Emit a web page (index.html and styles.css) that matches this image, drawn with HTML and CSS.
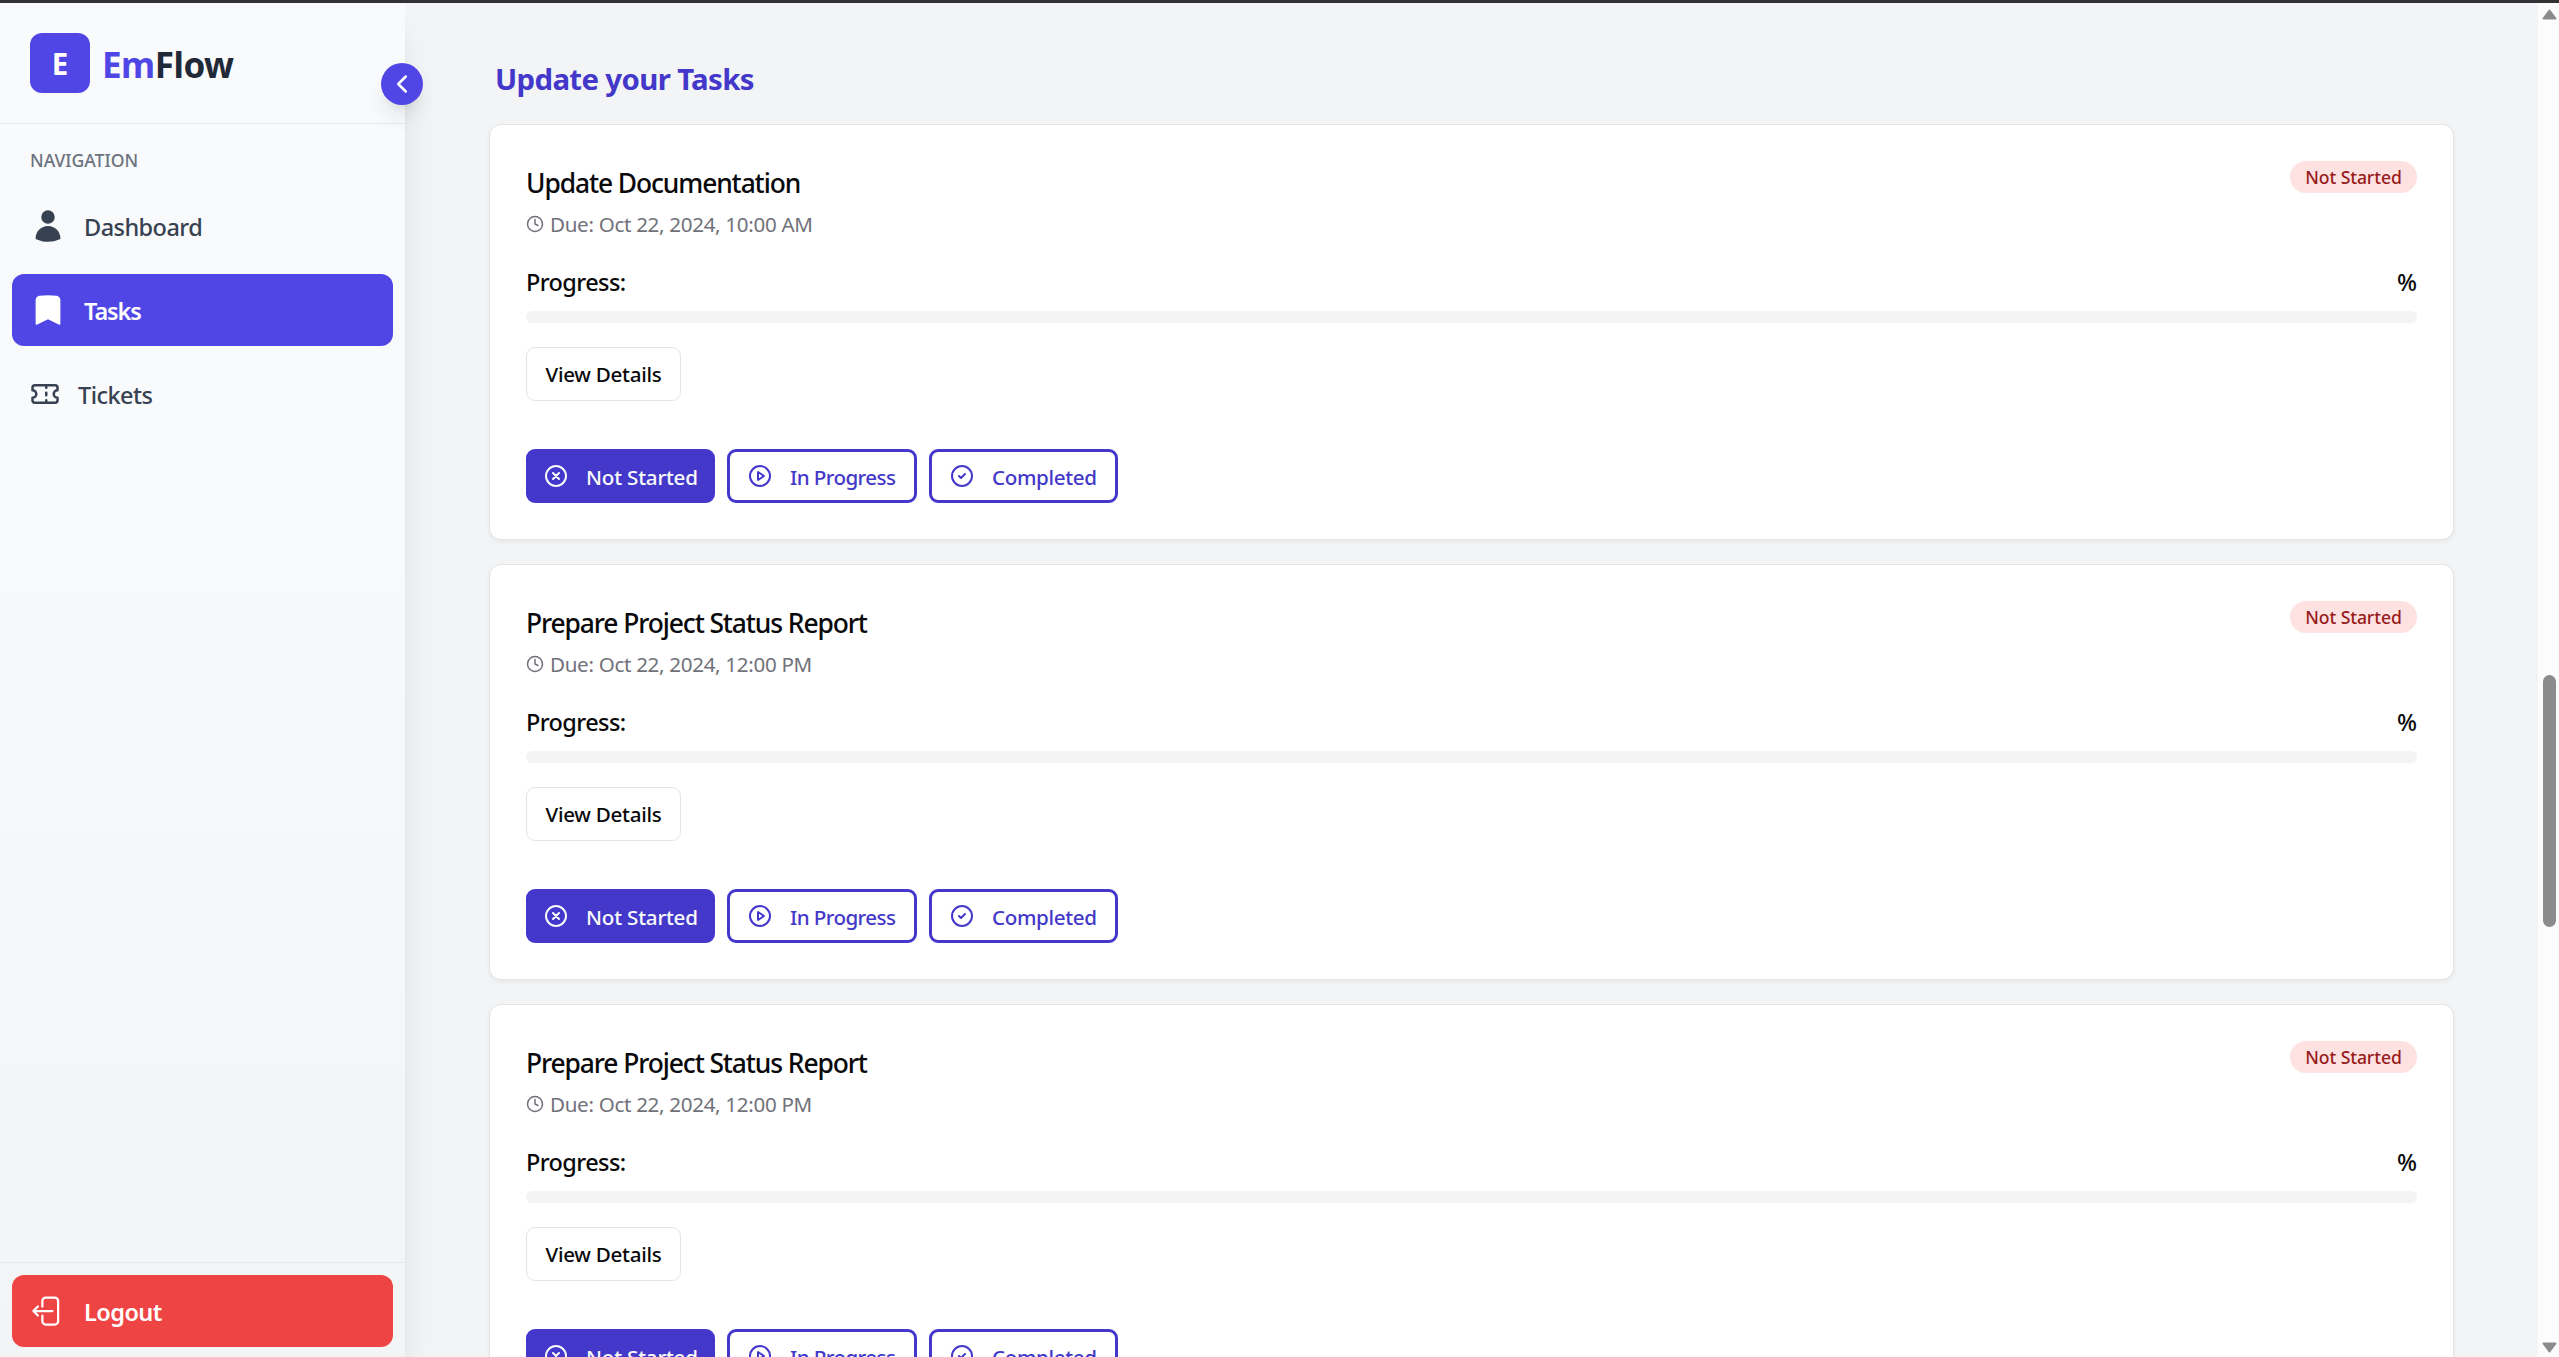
FILE: index.html
```html
<!DOCTYPE html>
<html lang="en">
<head>
<meta charset="utf-8">
<title>EmFlow - Tasks</title>
<link rel="stylesheet" href="styles.css">
</head>
<body>
<svg class="sprite" aria-hidden="true">
  <symbol id="clock" viewBox="0 0 24 24"><circle cx="12" cy="12" r="10"/><path d="M12 6v6l4 2"/></symbol>
  <symbol id="circle-x" viewBox="0 0 24 24"><circle cx="12" cy="12" r="10"/><path d="m15 9-6 6M9 9l6 6"/></symbol>
  <symbol id="circle-play" viewBox="0 0 24 24"><circle cx="12" cy="12" r="10"/><path d="m10 8 6 4-6 4z"/></symbol>
  <symbol id="circle-check" viewBox="0 0 24 24"><circle cx="12" cy="12" r="10"/><path d="m9 12 2 2 4-4"/></symbol>
</svg>
<div class="window-edge"></div>
<div class="app">
  <aside class="sidebar">
    <header class="brand">
      <div class="logo">E</div>
      <div class="brand-name"><span>Em</span>Flow</div>
    </header>
    <button class="toggle" aria-label="Collapse"><svg class="line" viewBox="0 0 24 24"><path d="m15 18-6-6 6-6"/></svg></button>
    <div class="nav-label">NAVIGATION</div>
    <nav class="nav">
      <a class="nav-item dashboard"><svg class="solid" viewBox="0 0 24 24"><path d="M7.5 6a4.5 4.5 0 119 0 4.5 4.5 0 01-9 0zM3.751 20.105a8.25 8.25 0 0116.498 0 .75.75 0 01-.437.695A18.683 18.683 0 0112 22.5c-2.786 0-5.433-.608-7.812-1.7a.75.75 0 01-.437-.695z"/></svg><span>Dashboard</span></a>
      <a class="nav-item active"><svg class="solid" viewBox="0 0 24 24"><path d="M6.32 2.577a49.255 49.255 0 0111.36 0c1.497.174 2.57 1.46 2.57 2.93V21a.75.75 0 01-1.085.67L12 18.089l-7.165 3.583A.75.75 0 013.75 21V5.507c0-1.47 1.073-2.756 2.57-2.93z"/></svg><span>Tasks</span></a>
      <a class="nav-item tickets"><svg class="line" viewBox="0 0 24 24"><path d="M2 9a3 3 0 0 1 0 6v2a2 2 0 0 0 2 2h16a2 2 0 0 0 2-2v-2a3 3 0 0 1 0-6V7a2 2 0 0 0-2-2H4a2 2 0 0 0-2 2ZM13 5v2M13 17v2M13 11v2"/></svg><span>Tickets</span></a>
    </nav>
    <footer class="side-foot">
      <a class="nav-item logout"><svg class="line thin" viewBox="0 0 24 24"><path d="M8.25 9V5.25A2.25 2.25 0 0 1 10.5 3h6a2.25 2.25 0 0 1 2.25 2.25v13.5A2.25 2.25 0 0 1 16.5 21h-6a2.25 2.25 0 0 1-2.25-2.25V15m-3 0-3-3m0 0 3-3m-3 3H15"/></svg><span>Logout</span></a>
    </footer>
  </aside>
  <main class="main">
    <h1>Update your Tasks</h1>
    <article class="card">
      <div class="card-head">
        <div>
          <h2>Update Documentation</h2>
          <p class="due"><svg class="line"><use href="#clock"/></svg><span>Due: Oct 22, 2024, 10:00 AM</span></p>
        </div>
        <span class="badge">Not Started</span>
      </div>
      <div class="progress-row"><span>Progress:</span><span class="percent">%</span></div>
      <div class="bar"></div>
      <button class="details">View Details</button>
      <div class="statuses">
        <button class="status selected"><svg class="line"><use href="#circle-x"/></svg><span>Not Started</span></button>
        <button class="status doing"><svg class="line"><use href="#circle-play"/></svg><span>In Progress</span></button>
        <button class="status done"><svg class="line"><use href="#circle-check"/></svg><span>Completed</span></button>
      </div>
    </article>
    <article class="card">
      <div class="card-head">
        <div>
          <h2>Prepare Project Status Report</h2>
          <p class="due"><svg class="line"><use href="#clock"/></svg><span>Due: Oct 22, 2024, 12:00 PM</span></p>
        </div>
        <span class="badge">Not Started</span>
      </div>
      <div class="progress-row"><span>Progress:</span><span class="percent">%</span></div>
      <div class="bar"></div>
      <button class="details">View Details</button>
      <div class="statuses">
        <button class="status selected"><svg class="line"><use href="#circle-x"/></svg><span>Not Started</span></button>
        <button class="status doing"><svg class="line"><use href="#circle-play"/></svg><span>In Progress</span></button>
        <button class="status done"><svg class="line"><use href="#circle-check"/></svg><span>Completed</span></button>
      </div>
    </article>
    <article class="card">
      <div class="card-head">
        <div>
          <h2>Prepare Project Status Report</h2>
          <p class="due"><svg class="line"><use href="#clock"/></svg><span>Due: Oct 22, 2024, 12:00 PM</span></p>
        </div>
        <span class="badge">Not Started</span>
      </div>
      <div class="progress-row"><span>Progress:</span><span class="percent">%</span></div>
      <div class="bar"></div>
      <button class="details">View Details</button>
      <div class="statuses">
        <button class="status selected"><svg class="line"><use href="#circle-x"/></svg><span>Not Started</span></button>
        <button class="status doing"><svg class="line"><use href="#circle-play"/></svg><span>In Progress</span></button>
        <button class="status done"><svg class="line"><use href="#circle-check"/></svg><span>Completed</span></button>
      </div>
    </article>
  </main>
  <div class="scrollbar">
    <svg class="arrow" viewBox="0 0 15 11"><path d="M7.5 1.5 13.5 9.5H1.5z"/></svg>
    <div class="thumb"></div>
    <svg class="arrow down" viewBox="0 0 15 11"><path d="M7.5 9.5 13.5 1.5H1.5z"/></svg>
  </div>
</div>
</body>
</html>
```
FILE: styles.css
```css
* { box-sizing: border-box; margin: 0; padding: 0; }
html, body { height: 100%; overflow: hidden; }
body {
  display: flex;
  flex-direction: column;
  font-family: "Noto Sans", "Open Sans", sans-serif;
  background: #f3f4f6;
  color: #09090b;
}
button { font: inherit; border: 0; background: none; color: inherit; }
svg { display: block; flex: none; }
.sprite { position: absolute; width: 0; height: 0; }
.line { fill: none; stroke: currentColor; stroke-width: 2; stroke-linecap: round; stroke-linejoin: round; }
.line.thin { stroke-width: 1.5; }
.solid { fill: currentColor; }

.window-edge { flex: none; height: 3px; background: #323234; }
.app { flex: 1; min-height: 0; display: flex; }

/* Sidebar */
.sidebar {
  position: relative;
  z-index: 1;
  flex: none;
  width: 405px;
  display: flex;
  flex-direction: column;
  background: linear-gradient(#f9fafb, #f8fafc 30%, #f3f4f6);
  box-shadow: 0 30px 37px -7px rgba(0,0,0,.1), 0 12px 15px -9px rgba(0,0,0,.1);
}
.brand {
  flex: none;
  height: 121px;
  padding: 30px 30px 0;
  display: flex;
  gap: 12px;
  border-bottom: 1px solid #e5e7eb;
}
.logo {
  width: 60px;
  height: 60px;
  border-radius: 12px;
  background: #4f46e5;
  color: #fff;
  font-size: 29.5px;
  font-weight: 700;
  line-height: 62px;
  text-align: center;
}
.brand-name { font-size: 35px; font-weight: 700; line-height: 64px; letter-spacing: -.5px; color: #1f2937; }
.brand-name span { color: #4f46e5; }
.toggle {
  position: absolute;
  top: 60px;
  right: -18px;
  width: 42px;
  height: 42px;
  border-radius: 50%;
  background: #4f46e5;
  color: #fff;
  display: grid;
  place-items: center;
  box-shadow: 0 15px 22px -4px rgba(0,0,0,.1), 0 6px 9px -6px rgba(0,0,0,.1);
}
.toggle svg { width: 30px; height: 30px; }
.nav-label {
  padding: 22px 30px 0;
  height: 66px;
  font-size: 17.6px;
  font-weight: 500;
  line-height: 28px;
  color: #6b7280;
}
.nav { flex: 1; display: flex; flex-direction: column; gap: 12px; padding: 0 12px; }
.nav-item {
  height: 72px;
  padding: 0 18px;
  display: flex;
  align-items: center;
  gap: 18px;
  border-radius: 12px;
  font-size: 23.5px;
  font-weight: 500;
  line-height: 36px;
  letter-spacing: -.55px;
  color: #374151;
}
.nav-item span { padding-top: 2px; }
.nav-item svg { width: 36px; height: 36px; }
.nav-item.active { background: #4f46e5; color: #fff; font-weight: 600; letter-spacing: -1.1px; }
.nav-item.tickets svg { width: 30px; height: 30px; }
.nav-item.logout { background: #ef4444; color: #fff; font-weight: 600; }
.side-foot { padding: 12px 12px 10px; border-top: 1px solid #e5e7eb; }

/* Task list */
.main {
  flex: 1;
  min-width: 0;
  padding: 54px 84px 0;
  display: flex;
  flex-direction: column;
  overflow: hidden;
}
h1 {
  flex: none;
  margin: 0 0 22px 6px;
  font-size: 29.4px;
  font-weight: 700;
  line-height: 45px;
  letter-spacing: -.65px;
  color: #4338ca;
}
.card {
  flex: none;
  height: 416px;
  margin-bottom: 24px;
  padding: 36px;
  border: 1px solid #e4e4e7;
  border-radius: 12px;
  background: #fff;
  box-shadow: 0 2px 4px rgba(0,0,0,.05);
}
.card-head { display: flex; justify-content: space-between; align-items: flex-start; }
h2 { font-size: 26.4px; font-weight: 500; line-height: 44px; letter-spacing: -1.1px; margin-bottom: 5px; }
.due { display: flex; gap: 6px; font-size: 20.6px; line-height: 29px; height: 30px; letter-spacing: -.32px; color: #71717a; }
.due svg { width: 18px; height: 18px; margin-top: 5px; }
.badge {
  width: 127px;
  height: 32px;
  border-radius: 16px;
  background: #fee2e2;
  color: #991b1b;
  font-size: 17.6px;
  font-weight: 500;
  line-height: 32px;
  letter-spacing: -.08px;
  text-align: center;
}
.progress-row {
  display: flex;
  justify-content: space-between;
  height: 36px;
  margin-top: 24px;
  font-size: 23.5px;
  font-weight: 500;
  line-height: 36px;
  letter-spacing: -.6px;
}
.percent { font-size: 23.5px; letter-spacing: 0; }
.bar { height: 12px; margin-top: 11px; border-radius: 6px; background: #f4f4f5; }
.details {
  display: block;
  width: 155px;
  height: 54px;
  margin-top: 24px;
  border: 1px solid #e4e4e7;
  border-radius: 9px;
  font-size: 20.6px;
  font-weight: 500;
  line-height: 51px;
  letter-spacing: -.28px;
}
.statuses { display: flex; gap: 12px; margin-top: 48px; }
.status {
  width: 190px;
  height: 54px;
  padding: 0 18px;
  display: flex;
  align-items: center;
  gap: 18px;
  border: 3px solid #4338ca;
  border-radius: 9px;
  color: #4338ca;
  font-size: 20.6px;
  font-weight: 500;
  white-space: nowrap;
}
.status svg { width: 24px; height: 24px; }
.status span { padding-top: 1px; }
.status.selected { width: 189px; padding: 0 15px; background: #4338ca; color: #fafafa; letter-spacing: -.2px; }
.status.doing { letter-spacing: -.6px; }
.status.done { width: 189px; letter-spacing: -.35px; }

/* Scrollbar */
.scrollbar {
  flex: none;
  width: 21px;
  padding: 6px 2px 4px 4px;
  display: flex;
  flex-direction: column;
  justify-content: space-between;
  align-items: center;
  background: #fcfcfc;
}
.arrow { width: 15px; height: 11px; fill: #8b8b8b; stroke: #8b8b8b; stroke-width: 2; stroke-linejoin: round; }
.thumb { width: 13px; height: 252px; margin-top: 239px; border-radius: 7px; background: #8b8b8b; }
```
